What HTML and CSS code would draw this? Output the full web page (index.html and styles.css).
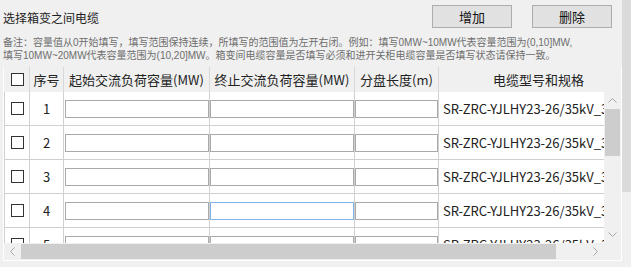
FILE: index.html
```html
<!DOCTYPE html>
<html lang="zh-CN">
<head>
    <meta charset="UTF-8">
    <title>选择箱变之间电缆</title>
    <link rel="stylesheet" href="styles.css">
</head>
<body>
    <div class="window">
        <div class="page">
            <div class="topbar">
                <span class="title">选择箱变之间电缆</span>
                <div class="actions">
                    <button class="btn">增加</button>
                    <button class="btn">删除</button>
                </div>
            </div>
            <p class="note">备注：容量值从0开始填写，填写范围保持连续，所填写的范围值为左开右闭。例如：填写0MW~10MW代表容量范围为(0,10]MW,<br>填写10MW~20MW代表容量范围为(10,20]MW。箱变间电缆容量是否填写必须和进开关柜电缆容量是否填写状态请保持一致。</p>

            <div class="grid">
                <div class="grid-head">
                    <div class="row head-row">
                        <div class="cell c-check"><span class="check"></span></div>
                        <div class="cell c-center">序号</div>
                        <div class="cell c-center">起始交流负荷容量(MW)</div>
                        <div class="cell c-center">终止交流负荷容量(MW)</div>
                        <div class="cell c-center">分盘长度(m)</div>
                        <div class="cell c-center">电缆型号和规格</div>
                    </div>
                </div>
                <div class="head-corner"></div>

                <div class="grid-body">
                    <div class="row body-row">
                        <div class="cell c-check"><span class="check"></span></div>
                        <div class="cell c-center">1</div>
                        <div class="cell c-start"><input type="text"></div>
                        <div class="cell"><input type="text"></div>
                        <div class="cell"><input type="text"></div>
                        <div class="cell c-text">SR-ZRC-YJLHY23-26/35kV_3×70</div>
                    </div>
                    <div class="row body-row">
                        <div class="cell c-check"><span class="check"></span></div>
                        <div class="cell c-center">2</div>
                        <div class="cell c-start"><input type="text"></div>
                        <div class="cell"><input type="text"></div>
                        <div class="cell"><input type="text"></div>
                        <div class="cell c-text">SR-ZRC-YJLHY23-26/35kV_3×95</div>
                    </div>
                    <div class="row body-row">
                        <div class="cell c-check"><span class="check"></span></div>
                        <div class="cell c-center">3</div>
                        <div class="cell c-start"><input type="text"></div>
                        <div class="cell"><input type="text"></div>
                        <div class="cell"><input type="text"></div>
                        <div class="cell c-text">SR-ZRC-YJLHY23-26/35kV_3×120</div>
                    </div>
                    <div class="row body-row">
                        <div class="cell c-check"><span class="check"></span></div>
                        <div class="cell c-center">4</div>
                        <div class="cell c-start"><input type="text"></div>
                        <div class="cell"><input type="text" class="focused"></div>
                        <div class="cell"><input type="text"></div>
                        <div class="cell c-text">SR-ZRC-YJLHY23-26/35kV_3×150</div>
                    </div>
                    <div class="row body-row">
                        <div class="cell c-check"><span class="check"></span></div>
                        <div class="cell c-center">5</div>
                        <div class="cell c-start"><input type="text"></div>
                        <div class="cell"><input type="text"></div>
                        <div class="cell"><input type="text"></div>
                        <div class="cell c-text">SR-ZRC-YJLHY23-26/35kV_3×185</div>
                    </div>
                </div>

                <div class="vscroll">
                    <div class="arrow">
                        <svg width="9" height="5" viewBox="0 0 9 5"><polyline points="0.5,4.5 4.5,0.5 8.5,4.5" fill="none" stroke="#a6a6a6"/></svg>
                    </div>
                    <div class="vthumb"></div>
                    <div class="track"></div>
                    <div class="arrow">
                        <svg width="9" height="5" viewBox="0 0 9 5"><polyline points="0.5,0.5 4.5,4.5 8.5,0.5" fill="none" stroke="#a6a6a6"/></svg>
                    </div>
                </div>

                <div class="hscroll">
                    <div class="arrow">
                        <svg width="5" height="9" viewBox="0 0 5 9"><polyline points="4.5,0.5 0.5,4.5 4.5,8.5" fill="none" stroke="#a6a6a6"/></svg>
                    </div>
                    <div class="hthumb"></div>
                    <div class="track"></div>
                    <div class="arrow">
                        <svg width="5" height="9" viewBox="0 0 5 9"><polyline points="0.5,0.5 4.5,4.5 0.5,8.5" fill="none" stroke="#a6a6a6"/></svg>
                    </div>
                </div>
                <div class="corner"></div>
            </div>
        </div>
        <div class="outer-scroll"><div class="outer-thumb"></div></div>
    </div>
</body>
</html>
```

FILE: styles.css
```css
* {
    box-sizing: border-box;
}
html, body {
    margin: 0;
    height: 100%;
    overflow: hidden;
}
body {
    font-family: "Noto Sans CJK SC", "Noto Sans", sans-serif;
    background: #f0f0f0;
    color: #222;
}
.window {
    display: flex;
    height: 267px;
}
.page {
    width: 622px;
    flex: none;
}
.outer-scroll {
    flex: 1;
}
.outer-thumb {
    height: 192px;
    background: #dadada;
}

/* top bar */
.topbar {
    display: flex;
    justify-content: space-between;
    align-items: flex-start;
    padding: 5px 10px 0 3px;
}
.title {
    font-size: 12px;
    line-height: 16px;
    margin-top: 5px;
    color: #1e1e1e;
}
.actions {
    display: flex;
    gap: 20px;
}
.btn {
    width: 80px;
    height: 23px;
    padding: 0;
    font-family: inherit;
    font-size: 13px;
    line-height: 21px;
    color: #111;
    background: #e1e1e1;
    border: 1px solid #adadad;
    border-radius: 0;
}

.note {
    margin: 8px 0 0 3px;
    font-family: "Liberation Sans", "Noto Sans CJK SC", sans-serif;
    font-size: 10px;
    line-height: 13px;
    color: #6e6e6e;
    white-space: nowrap;
}

/* data grid */
.grid {
    display: grid;
    grid-template-columns: 600px 17px;
    grid-template-rows: 25px 151px 17px;
    width: 619px;
    margin: 5px 0 0 3px;
    border: 1px solid #fff;
    border-top: none;
    font-size: 13px;
}
.grid-head,
.grid-body {
    overflow: hidden;
}
.head-corner,
.corner {
    background: #f0f0f0;
}
.row {
    display: grid;
    grid-template-columns: 25px 34px 146px 145px 84px 200px;
    width: max-content;
}
.head-row {
    height: 25px;
    border-left: 1px solid transparent;
    color: #222;
}
.body-row {
    height: 34px;
    background: #fff;
    border-left: 1px solid #d0d0d0;
    border-bottom: 1px solid #d0d0d0;
    color: #222;
}
.cell {
    display: flex;
    align-items: center;
    border-right: 1px solid #d0d0d0;
    white-space: nowrap;
    overflow: hidden;
}
.head-row .cell {
    border-right-color: #d8d8d8;
}
.c-check,
.c-center {
    justify-content: center;
}
.c-center {
    padding-bottom: 1px;
}
.c-text {
    padding-left: 4px;
    padding-bottom: 1px;
}
.check {
    width: 13px;
    height: 13px;
    border: 1px solid #333;
    background: #fff;
}
.cell input {
    display: block;
    width: 100%;
    height: 18px;
    margin: 0;
    padding: 0 2px;
    border: 1px solid #a9a9a9;
    background: #fff;
    font: inherit;
    outline: none;
}
.c-start input {
    margin-left: 1px;
}
.cell input.focused {
    border-color: #7eb4ea;
}

/* scrollbars */
.vscroll {
    display: flex;
    flex-direction: column;
    background: #f0f0f0;
}
.hscroll {
    display: flex;
    background: #f0f0f0;
}
.arrow {
    width: 17px;
    height: 17px;
    flex: none;
    display: flex;
    align-items: center;
    justify-content: center;
}
.vthumb {
    height: 47px;
    margin: 0 1px;
    background: #cdcdcd;
}
.hthumb {
    width: 535px;
    margin: 1px 0;
    background: #cdcdcd;
}
.track {
    flex: 1;
}
```
